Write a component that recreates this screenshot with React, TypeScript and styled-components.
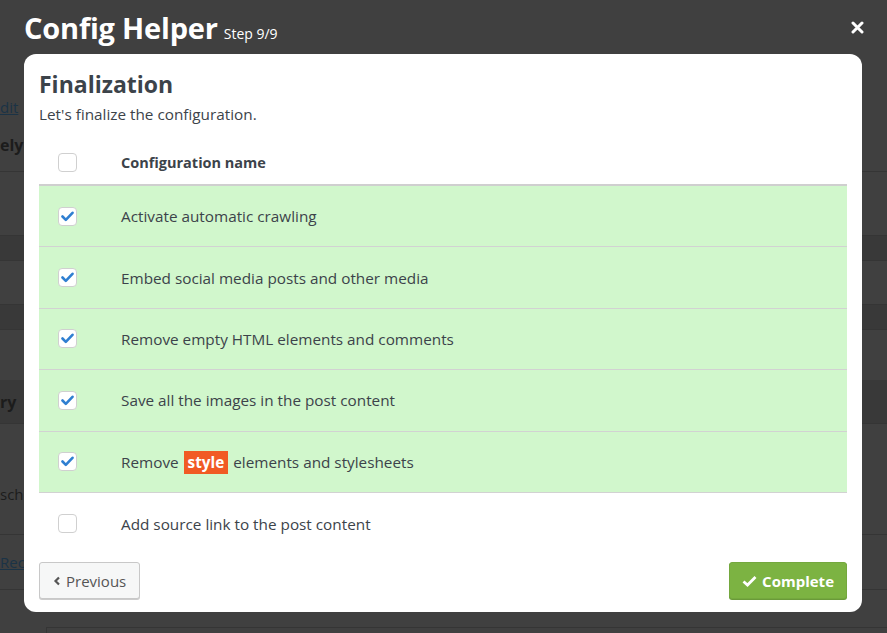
import styled, { createGlobalStyle } from "styled-components";

const GlobalStyle = createGlobalStyle`
  html, body {
    margin: 0;
    padding: 0;
    background: #404040;
    font-family: "Open Sans", "Noto Sans", sans-serif;
  }
  * { box-sizing: border-box; }
`;

const Screen = styled.div`
  position: relative;
  width: 887px;
  height: 633px;
  overflow: hidden;
  background: #404040;
`;

// dimmed page underneath the overlay
const BackPage = styled.div`
  display: flex;
  flex-direction: column;
`;
const BackRow = styled.div<{ $h: number; $dark?: boolean; $line?: boolean }>`
  height: ${(p) => p.$h}px;
  background: ${(p) => (p.$dark ? "#393939" : "transparent")};
  border-bottom: ${(p) => (p.$line ? "1px solid #353535" : "none")};
  display: flex;
  align-items: center;
  font-size: 15px;
  color: #1c1c1c;
`;
const BackLink = styled.span`
  color: #1b3346;
  text-decoration: underline;
`;
const BackBold = styled.span`
  font-weight: 700;
  font-size: 16px;
`;
const BackText = styled.span`
  margin-top: 30px;
`;
const BackBox = styled.div`
  margin-left: 46px;
  height: 20px;
  border-top: 1px solid #353535;
  border-left: 1px solid #353535;
`;

const Header = styled.div`
  position: absolute;
  left: 24px;
  right: 24px;
  top: 0;
  height: 54px;
  display: flex;
  align-items: center;
  justify-content: space-between;
  color: #fff;
`;
const TitleWrap = styled.div`
  display: flex;
  align-items: baseline;
  gap: 6px;
`;
const Title = styled.h1`
  margin: 0;
  font-size: 29px;
  font-weight: 700;
  letter-spacing: -0.2px;
`;
const Step = styled.span`
  font-size: 14px;
`;
const Close = styled.button`
  border: 0;
  background: none;
  padding: 0;
  margin-right: -1px;
  display: flex;
  cursor: pointer;
`;

const Modal = styled.div`
  position: absolute;
  left: 24px;
  top: 54px;
  width: 838px;
  height: 558px;
  background: #fff;
  border-radius: 12px;
  padding: 14px 15px 13px;
  display: flex;
  flex-direction: column;
  color: #3c434a;
`;
const Heading = styled.h2`
  margin: 0;
  font-size: 23px;
  font-weight: 700;
  line-height: 32px;
`;
const Sub = styled.p`
  margin: 0;
  font-size: 15.3px;
  line-height: 28px;
`;

const Table = styled.div`
  margin-top: 12px;
  display: flex;
  flex-direction: column;
`;
const Row = styled.div<{ $on?: boolean; $head?: boolean }>`
  display: flex;
  align-items: center;
  flex-shrink: 0;
  height: ${(p) => (p.$head ? 46 : 61.4)}px;
  background: ${(p) => (p.$on ? "#d1f7cc" : "#fff")};
  border-bottom: ${(p) =>
    p.$head ? "2px solid #cfcfcf" : "1px solid #d2d2d2"};
  &:last-child {
    border-bottom: 0;
  }
`;
const BoxCell = styled.div`
  width: 72px;
  padding-left: 19px;
  display: flex;
`;
const NameCell = styled.div<{ $head?: boolean }>`
  padding-left: 10px;
  font-size: ${(p) => (p.$head ? 14.5 : 15.3)}px;
  font-weight: ${(p) => (p.$head ? 700 : 400)};
`;
const Check = styled.span`
  width: 19px;
  height: 19px;
  border: 1px solid #d0d0d0;
  border-radius: 4px;
  background: #fff;
  display: flex;
  align-items: center;
  justify-content: center;
`;
const Tag = styled.span`
  background: #f15a24;
  color: #fff;
  font-weight: 700;
  padding: 1px 4px 2px;
  margin: 0 1px;
`;

const Footer = styled.div`
  margin-top: auto;
  display: flex;
  justify-content: space-between;
`;
const Button = styled.button<{ $primary?: boolean }>`
  height: 37px;
  padding: 0 ${(p) => (p.$primary ? 12 : 13)}px;
  display: flex;
  align-items: center;
  gap: 5px;
  font-family: inherit;
  font-size: 15px;
  font-weight: ${(p) => (p.$primary ? 700 : 400)};
  color: ${(p) => (p.$primary ? "#fff" : "#555")};
  background: ${(p) => (p.$primary ? "#7cb342" : "#f6f7f7")};
  border: 1px solid ${(p) => (p.$primary ? "#74a83e" : "#c8c8c8")};
  border-radius: 3px;
  box-shadow: 0 1px 0 ${(p) => (p.$primary ? "#6a9a39" : "#ccc")};
`;

const CheckMark = () => (
  <svg width="13" height="11" viewBox="0 0 13 11">
    <path
      d="M1.5 5.5 L4.8 8.8 L11.5 1.8"
      fill="none"
      stroke="#2f7fd1"
      strokeWidth="2.6"
      strokeLinecap="round"
      strokeLinejoin="round"
    />
  </svg>
);

const rows: { on: boolean; text: React.ReactNode }[] = [
  { on: true, text: "Activate automatic crawling" },
  { on: true, text: "Embed social media posts and other media" },
  { on: true, text: "Remove empty HTML elements and comments" },
  { on: true, text: "Save all the images in the post content" },
  {
    on: true,
    text: (
      <>
        Remove <Tag>style</Tag> elements and stylesheets
      </>
    ),
  },
  { on: false, text: "Add source link to the post content" },
];

const App = () => {
  return (
    <Screen>
      <GlobalStyle />
      <BackPage>
        <BackRow $h={96} />
        <BackRow $h={22}>
          <BackLink>dit</BackLink>
        </BackRow>
        <BackRow $h={54} $line>
          <BackBold>ely</BackBold>
        </BackRow>
        <BackRow $h={64} $line />
        <BackRow $h={25} $dark $line />
        <BackRow $h={44} $line />
        <BackRow $h={25} $dark $line />
        <BackRow $h={50} />
        <BackRow $h={44} $dark $line>
          <BackBold>ry</BackBold>
        </BackRow>
        <BackRow $h={111} $line>
          <BackText>sch</BackText>
        </BackRow>
        <BackRow $h={55} $line>
          <BackLink>Rec</BackLink>
        </BackRow>
        <BackRow $h={37} />
        <BackBox />
      </BackPage>

      <Header>
        <TitleWrap>
          <Title>Config Helper</Title>
          <Step>Step 9/9</Step>
        </TitleWrap>
        <Close aria-label="Close">
          <svg width="13" height="13" viewBox="0 0 13 13">
            <path
              d="M2 2 L11 11 M11 2 L2 11"
              stroke="#fff"
              strokeWidth="3"
              strokeLinecap="round"
            />
          </svg>
        </Close>
      </Header>

      <Modal>
        <Heading>Finalization</Heading>
        <Sub>Let's finalize the configuration.</Sub>
        <Table>
          <Row $head>
            <BoxCell>
              <Check />
            </BoxCell>
            <NameCell $head>Configuration name</NameCell>
          </Row>
          {rows.map((r, i) => (
            <Row key={i} $on={r.on}>
              <BoxCell>
                <Check>{r.on && <CheckMark />}</Check>
              </BoxCell>
              <NameCell>{r.text}</NameCell>
            </Row>
          ))}
        </Table>
        <Footer>
          <Button>
            <svg width="8" height="10" viewBox="0 0 8 10">
              <path
                d="M6 1.5 L2.5 5 L6 8.5"
                fill="none"
                stroke="#555"
                strokeWidth="2.2"
              />
            </svg>
            Previous
          </Button>
          <Button $primary>
            <svg width="15" height="12" viewBox="0 0 15 12">
              <path
                d="M1.5 6.5 L5.5 10 L13.5 2"
                fill="none"
                stroke="#fff"
                strokeWidth="2.8"
              />
            </svg>
            Complete
          </Button>
        </Footer>
      </Modal>
    </Screen>
  );
};

export default App;
